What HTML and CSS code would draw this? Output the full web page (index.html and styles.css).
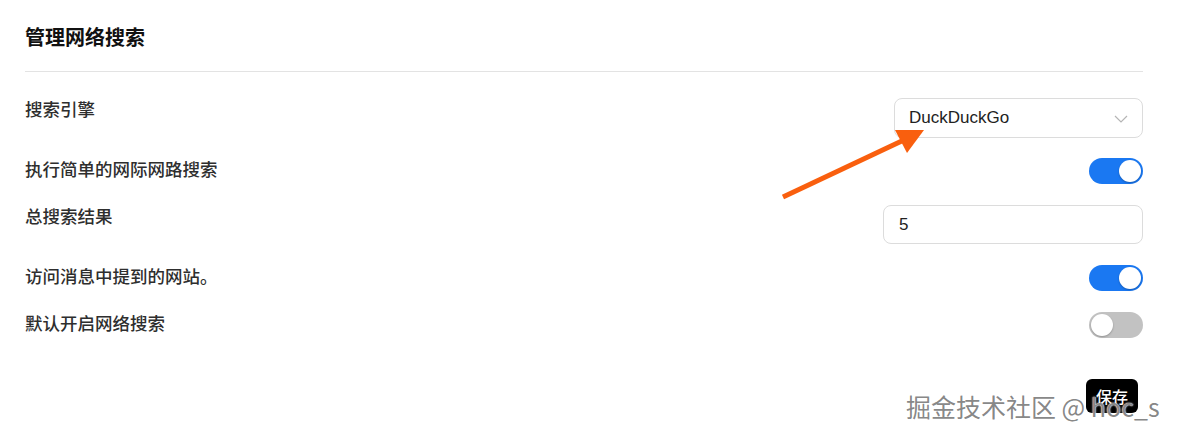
FILE: index.html
```html
<!DOCTYPE html>
<html lang="zh-CN">
<head>
    <meta charset="UTF-8">
    <meta name="viewport" content="width=device-width, initial-scale=1.0">
    <title>管理网络搜索</title>
    <link rel="stylesheet" href="styles.css">
</head>
<body>
    <div class="panel">
        <h2 class="panel-title">管理网络搜索</h2>
        <div class="divider"></div>

        <div class="settings">
            <div class="row row-select">
                <span class="label">搜索引擎</span>
                <div class="select">
                    <span>DuckDuckGo</span>
                    <svg class="chevron" width="14" height="8" viewBox="0 0 14 8">
                        <path d="M1 1 L7 7 L13 1" fill="none" stroke="#b5b5b5" stroke-width="1.2"/>
                    </svg>
                </div>
            </div>
            <div class="row">
                <span class="label">执行简单的网际网路搜索</span>
                <div class="toggle on"><span class="knob"></span></div>
            </div>
            <div class="row">
                <span class="label">总搜索结果</span>
                <div class="text-input">5</div>
            </div>
            <div class="row">
                <span class="label">访问消息中提到的网站。</span>
                <div class="toggle on"><span class="knob"></span></div>
            </div>
            <div class="row">
                <span class="label">默认开启网络搜索</span>
                <div class="toggle"><span class="knob"></span></div>
            </div>
        </div>

        <div class="actions">
            <button class="save-btn">保存</button>
        </div>
    </div>

    <!-- annotation arrow drawn over the page -->
    <svg class="arrow" width="1177" height="437" viewBox="0 0 1177 437">
        <line x1="783" y1="197" x2="906" y2="139" stroke="#f95f0e" stroke-width="5"/>
        <polygon points="895,130 924,130 907,153" fill="#f95f0e"/>
    </svg>

    <div class="watermark">掘金技术社区 @ hoc_s</div>
</body>
</html>
```

FILE: styles.css
```css
body {
    margin: 0;
    padding: 0;
    background: #ffffff;
    font-family: "Liberation Sans", "Noto Sans CJK SC", sans-serif;
    color: #333333;
}

.panel {
    padding: 24px 34px 0 25px;
}

.panel-title {
    margin: 0;
    font-size: 20px;
    line-height: 28px;
    font-weight: 700;
    color: #111111;
}

.divider {
    height: 1px;
    background: #e3e3e3;
    margin-top: 19px;
}

.settings {
    display: flex;
    flex-direction: column;
    gap: 21px;
    margin-top: 26px;
}

.row {
    display: flex;
    justify-content: space-between;
    align-items: flex-start;
}

.row-select {
    margin-bottom: -1px;
}

.label {
    font-size: 17.5px;
    line-height: 24px;
    font-weight: 500;
    color: #2e2e2e;
}

.select {
    width: 219px;
    height: 38px;
    border: 1px solid #dcdcdc;
    border-radius: 8px;
    display: flex;
    align-items: center;
    justify-content: space-between;
    padding: 0 14px 0 14px;
    font-size: 17px;
    color: #222222;
}

.chevron {
    margin-top: 1px;
}

.text-input {
    width: 243px;
    height: 37px;
    border: 1px solid #dcdcdc;
    border-radius: 8px;
    padding-left: 15px;
    display: flex;
    align-items: center;
    font-size: 17px;
    color: #222222;
}

.toggle {
    width: 54px;
    height: 26px;
    border-radius: 13px;
    background: #c2c2c2;
    display: flex;
    align-items: center;
    padding: 0 2px;
    box-sizing: border-box;
}

.toggle.on {
    background: #1a78f2;
    justify-content: flex-end;
}

.knob {
    width: 22px;
    height: 22px;
    border-radius: 50%;
    background: #ffffff;
    box-shadow: 0 1px 2px rgba(0, 0, 0, 0.25);
}

.actions {
    display: flex;
    justify-content: flex-end;
    margin-top: 41px;
    padding-right: 5px;
}

.save-btn {
    width: 52px;
    height: 34px;
    border: none;
    border-radius: 6px;
    background: #000000;
    color: #ffffff;
    font-family: "Noto Sans CJK SC", sans-serif;
    font-size: 16px;
    font-weight: 500;
    padding: 0;
}

.arrow {
    position: absolute;
    left: 0;
    top: 0;
    pointer-events: none;
}

.watermark {
    position: absolute;
    left: 906px;
    top: 390px;
    font-family: "Noto Sans CJK SC", sans-serif;
    font-size: 25px;
    line-height: 32px;
    color: rgba(120, 120, 120, 0.9);
    text-shadow: 0 0 2px #ffffff, 0 0 1px #ffffff;
    white-space: nowrap;
}
```
